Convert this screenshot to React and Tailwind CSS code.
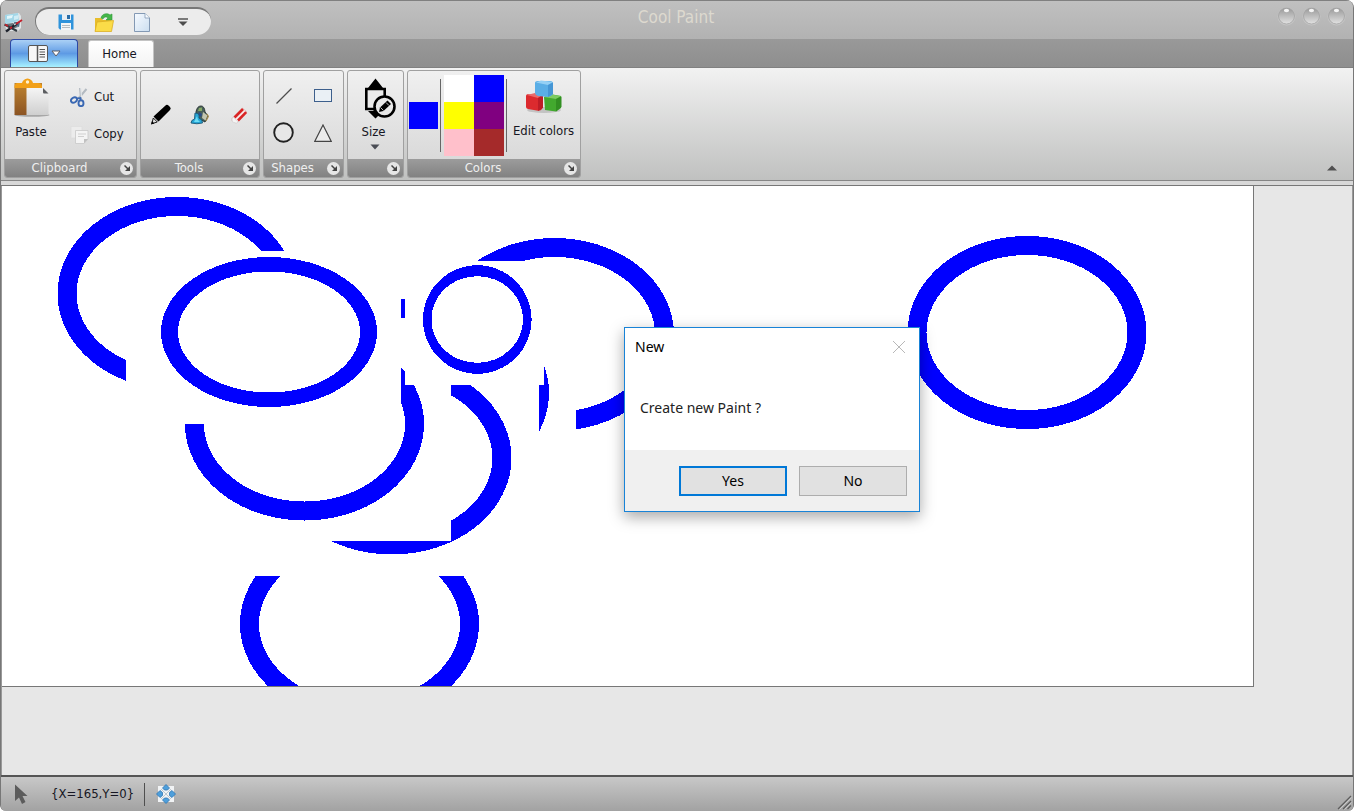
import React from "react";

const BLUE = "#0000ff";

function AppIcon() {
  return (
    <svg width="19" height="20" viewBox="0 0 19 20" aria-hidden="true">
      <path d="M1 2 L15 0 L17 3 L17 15 L14 18 L3 18 L1 13Z" fill="#dfe4e6" />
      <path d="M1 2 L14 0 L15 8 L1 11Z" fill="#a3d7e8" />
      <path d="M3 3 L9 2 L8 5 L3 6Z" fill="#e2f6fb" />
      <path d="M10 3 L15 2 L14 6 L10 7Z" fill="#cfecf5" />
      <path d="M10 9 L16 9 L15 14 L11 13Z" fill="#50748a" />
      <path d="M2 11 L9 10 L14 14 L8 16Z" fill="#66747b" />
      <path d="M0.500 11.500 L13 18" stroke="#353c42" strokeWidth="2" />
      <path d="M2 18.500 L13 10.500" stroke="#1d222c" strokeWidth="2.400" />
      <path d="M12 11 L18 7" stroke="#c5202b" strokeWidth="2" />
      <path d="M6 15.500 L8 14" stroke="#c5202b" strokeWidth="2" />
      <path d="M1 11.500 L4 13" stroke="#c5202b" strokeWidth="1.600" />
      <path d="M10 12 L12 10.800" stroke="#fff" strokeWidth="1" />
    </svg>
  );
}

function SaveIcon() {
  return (
    <svg width="16" height="16" viewBox="0 0 16 16" aria-hidden="true">
      <path d="M0.500 0.500 H15.500 V15.500 H2 L0.500 14Z" fill="#2f93db" />
      <rect x="4" y="0" width="9" height="6" fill="#e8eef3" />
      <rect x="9" y="1" width="3" height="4" fill="#2b6ea8" />
      <rect x="3" y="9" width="10" height="7" fill="#f3f5f6" />
      <path d="M4 11.500 H12 M4 13.500 H12" stroke="#b4bcc2" />
    </svg>
  );
}

function OpenIcon() {
  return (
    <svg width="20" height="19" viewBox="0 0 20 19" aria-hidden="true">
      <path d="M1 5 H7 L9 7 H17 V18 H1Z" fill="#e8bd2b" />
      <path d="M7 5 C8 0 14 0 16 2 L18 1 V7 H12 L14 5 C12 3 10 4 9 6Z" fill="#45b649" stroke="#2f9a38" strokeWidth="0.600" />
      <path d="M3 9 L19.500 7.500 L17.500 18.500 H1Z" fill="#fbdc48" stroke="#dcae25" strokeWidth="0.800" />
    </svg>
  );
}

function NewIcon() {
  return (
    <svg width="16" height="19" viewBox="0 0 16 19" aria-hidden="true">
      <defs>
        <linearGradient id="sheet" x1="0" y1="0" x2="1" y2="1">
          <stop offset="0" stopColor="#f6faff" />
          <stop offset="1" stopColor="#cbdef0" />
        </linearGradient>
      </defs>
      <path d="M0.500 0.500 H11 L15.500 5 V18.500 H0.500Z" fill="url(#sheet)" stroke="#8399b4" />
      <path d="M11 0.500 V5 H15.500" fill="#f7fbff" stroke="#8399b4" strokeWidth="0.800" />
    </svg>
  );
}

function PasteIcon() {
  return (
    <svg width="36" height="39" viewBox="0 0 36 39" aria-hidden="true">
      <defs>
        <linearGradient id="board" x1="0" y1="0" x2="0" y2="1">
          <stop offset="0" stopColor="#bd8330" />
          <stop offset="1" stopColor="#8c5423" />
        </linearGradient>
        <linearGradient id="page" x1="0" y1="0" x2="0" y2="1">
          <stop offset="0" stopColor="#f5f5f5" />
          <stop offset="1" stopColor="#cfcfcf" />
        </linearGradient>
      </defs>
      <ellipse cx="18" cy="37" rx="17.500" ry="1.800" fill="#8d8d8d" opacity="0.700" />
      <path d="M0.500 5 H28 V37 H0.500Z" fill="url(#board)" />
      <path d="M0.500 10 V8 Q1 5 4 5 H8 Q9 1 13.500 0.500 Q18 1 19 5 H24 Q27 5 28 8 V10Z" fill="#f2a018" />
      <circle cx="13.500" cy="4" r="1.700" fill="#fff2cf" />
      <path d="M12.500 10 H29 L34.500 15.500 V37 H12.500Z" fill="url(#page)" />
      <path d="M29 10 L34.500 15.500 H30 Q29 15.500 29 14Z" fill="#5b5d60" />
    </svg>
  );
}

function CutIcon() {
  return (
    <svg width="18" height="20" viewBox="0 0 18 20" aria-hidden="true">
      <path d="M10 1 L11 12 M16.500 2 L8 12" stroke="#b3bac1" strokeWidth="2" />
      <path d="M10.800 1 L11.500 11" stroke="#e9edf0" strokeWidth="1" />
      <ellipse cx="4" cy="13" rx="3.200" ry="2.400" fill="none" stroke="#3a68b3" strokeWidth="1.900" transform="rotate(-35 4 13)" />
      <ellipse cx="11" cy="16.200" rx="2.500" ry="2.900" fill="none" stroke="#3a68b3" strokeWidth="1.900" />
      <path d="M6.500 11.500 L10.500 11 L10.500 13.500" fill="none" stroke="#3a68b3" strokeWidth="1.700" />
    </svg>
  );
}

function CopyIcon() {
  return (
    <svg width="19" height="19" viewBox="0 0 19 19" aria-hidden="true">
      <path d="M1 1.500 H12 V13 H1Z" fill="#ececec" stroke="#dcdcdc" strokeWidth="0.700" />
      <path d="M5.500 5.500 H18 V14 L14 18.500 H5.500Z" fill="#f4f4f4" stroke="#cccccc" strokeWidth="0.900" />
      <path d="M8 9 H16 M8 11.500 H14" stroke="#d0d0d0" />
      <path d="M18 14 H14 V18.500Z" fill="#c0c0c0" />
    </svg>
  );
}

function PenIcon() {
  return (
    <svg width="22" height="22" viewBox="0 0 22 22" aria-hidden="true">
      <path d="M15.500 1.500 Q17 0 19 2 L20 3 Q21.500 4.500 20 6 L8.500 17.500 L3.500 12.500Z" fill="#000" />
      <path d="M3.300 14 L7.300 18 L1.800 19.700Z" fill="#ddd" stroke="#000" strokeWidth="0.900" />
      <path d="M1 20.500 L2 17 L4.300 19.500Z" fill="#000" />
    </svg>
  );
}

function FillIcon() {
  return (
    <svg width="20" height="20" viewBox="0 0 20 20" aria-hidden="true">
      <path d="M6 7 Q7 1 11 1 Q14.500 1 15 7 L18 11 L15 17 L8 13Z" fill="#49605b" stroke="#2b3734" />
      <path d="M9 3 L12 2.500 L12 6 L8 6Z" fill="#86a965" />
      <path d="M13 7 L17.500 10.500 L15.500 15.500 L12 13Z" fill="#c3c6b0" />
      <path d="M17 9 L18.300 11.500 L16 16" fill="none" stroke="#a38b4d" strokeWidth="1.200" />
      <path d="M9 7 L12 9 L11 12 L8 10Z" fill="#2b4c88" />
      <path d="M5 8 Q10 8 9 13 Q13 15 12.500 18 Q7 19.500 1 18 Q1 15 4.500 14Z" fill="#27a6d6" stroke="#1b5877" strokeWidth="0.900" />
      <path d="M4 17 L7 11 L8 15 L10 17Z" fill="#6bdcf5" />
    </svg>
  );
}

function EraserIcon() {
  return (
    <svg width="17" height="17" viewBox="0 0 17 17" aria-hidden="true">
      <path d="M1 11.500 L11.500 1 L16 5 L5.500 16 L1 14Z" fill="#f7e9e9" stroke="#d9a6a6" strokeWidth="0.600" />
      <path d="M3.500 10.500 L12 2" stroke="#d92424" strokeWidth="2.600" />
      <path d="M7 13.500 L15.200 5.200" stroke="#d92424" strokeWidth="2.600" />
      <path d="M1 11.800 L2.500 10.500 L7 14.700 L5.500 16.200 L1.500 15Z" fill="#f4f4f4" stroke="#ccc" strokeWidth="0.500" />
    </svg>
  );
}

function SizeIcon() {
  return (
    <svg width="32" height="42" viewBox="0 0 32 42" aria-hidden="true">
      <path d="M11.500 0.500 L19 10 H4Z M11.500 40.500 L4 33 H19Z" fill="#000" />
      <path d="M2.300 11 H20.700 V31 H2.300Z" fill="#ececec" stroke="#000" strokeWidth="2.600" />
      <path d="M9.500 7 H13.500 V11 H9.500Z M9.500 30 H13.500 V36 H9.500Z" fill="#000" />
      <circle cx="20.500" cy="28.500" r="10" fill="#e8e8e8" stroke="#000" strokeWidth="2.600" />
      <path d="M23.500 22.500 L27 26 L19.500 33 L15 34 L16 29.500Z" fill="#000" />
      <path d="M22 24.500 L25 27.500 M16.500 29.500 L19.500 32.500" stroke="#e8e8e8" strokeWidth="0.800" />
    </svg>
  );
}

function CubesIcon() {
  return (
    <svg width="38" height="34" viewBox="0 0 38 34" aria-hidden="true">
      <defs>
        <filter id="cubeSoft" x="-10%" y="-10%" width="120%" height="120%">
          <feGaussianBlur stdDeviation="0.500" />
        </filter>
      </defs>
      <ellipse cx="19" cy="30" rx="17" ry="3" fill="#9a9a9a" opacity="0.450" />
      <g filter="url(#cubeSoft)">
        <path d="M1 16 Q1 14 3 14.300 L17 16 V29 Q16 31 13 30.800 L3 29 Q1 28.500 1 27Z" fill="#dc2a2e" />
        <path d="M2 15 L10 13 L18 14.500 L13 18Z" fill="#ea6a6a" />
        <path d="M13 18 L18 15 V28 L13 31Z" fill="#be1f25" />
        <path d="M19 17 L25 14 L36 16 V28 L31 31.500 L20 30Z" fill="#42a92f" />
        <path d="M19 17 L26 14.500 L36 16 L31 19Z" fill="#7dcb62" />
        <path d="M31 19 L36.500 16.500 V27 L31 31.500Z" fill="#318f24" />
        <path d="M10 3 Q10 1 13 1 L25 1 Q28 1 28 3.500 V14 Q27 16 23 17 L13 16 Q10 15 10 13Z" fill="#5aaee6" />
        <path d="M11 2.500 L16 0.500 L28 2 L23 5Z" fill="#94d0f5" />
        <path d="M23 5 L28 2.500 V14 L23 17Z" fill="#4496d5" />
      </g>
    </svg>
  );
}

function MoveIcon() {
  return (
    <svg width="20" height="20" viewBox="0 0 20 20" aria-hidden="true">
      <rect x="2" y="2" width="16" height="16" fill="#f1f3f5" />
      <path d="M5 5 L15 15 M15 5 L5 15" stroke="#bcc7cf" strokeWidth="1" />
      <path
        d="M10 0.500 L13.500 4 L11.500 6 H8.500 L6.500 4Z M10 19.500 L6.500 16 L8.500 14 H11.500 L13.500 16Z M0.500 10 L4 6.500 L6.500 8.500 V11.500 L4 13.500Z M19.500 10 L16 13.500 L13.500 11.500 V8.500 L16 6.500Z"
        fill="#4e9fdb"
        stroke="#2e75b2"
        strokeWidth="0.800"
      />
    </svg>
  );
}

function Launcher({ label }) {
  return (
    <button
      type="button"
      aria-label={label}
      className="flex size-[13px] items-center justify-center rounded-full bg-[#e6e6e6]"
    >
      <svg width="6" height="6" viewBox="0 0 6 6" aria-hidden="true">
        <path d="M0.500 0.500 L4 4" fill="none" stroke="#444" strokeWidth="1.500" />
        <path d="M6 1 V6 H1Z" fill="#444" />
      </svg>
    </button>
  );
}

function Group({ title, width, children }) {
  return (
    <section
      className={`flex flex-col overflow-hidden rounded-[3px] border border-[#a0a0a0] bg-linear-to-b from-[#f0f0f0] to-[#d5d5d5] ${width}`}
    >
      <div className="flex flex-1">{children}</div>
      <footer className="flex h-[18px] items-center bg-linear-to-b from-[#9c9c9c] to-[#828282] pr-[3px] text-[#efefef]">
        <h2 className="flex-1 pr-[6px] pb-px text-center leading-4">{title}</h2>
        <Launcher label={`${title || "Size"} options`} />
      </footer>
    </section>
  );
}

function QuickAccess() {
  return (
    <div className="flex h-7 w-[176px] items-center rounded-full border-t-2 border-l border-[#777] bg-[#ececec] pl-[22px]">
      <button type="button" aria-label="Save"><SaveIcon /></button>
      <button type="button" aria-label="Open" className="ml-5"><OpenIcon /></button>
      <button type="button" aria-label="New" className="ml-5"><NewIcon /></button>
      <button type="button" aria-label="Customize toolbar" className="ml-7">
        <svg width="10" height="8" viewBox="0 0 10 8" aria-hidden="true">
          <path d="M0 1 H10" stroke="#555" strokeWidth="1.500" />
          <path d="M0.500 3.500 H9.500 L5 8Z" fill="#4d4d4d" />
        </svg>
      </button>
    </div>
  );
}

function Orb({ label }) {
  return (
    <button type="button" aria-label={label}>
      <svg width="19" height="20" viewBox="0 0 19 20" aria-hidden="true">
        <defs>
          <linearGradient id="orb" x1="0" y1="0" x2="0" y2="1">
            <stop offset="0" stopColor="#999" />
            <stop offset="0.500" stopColor="#bdbdbd" />
            <stop offset="1" stopColor="#e2e2e2" />
          </linearGradient>
        </defs>
        <circle cx="9.500" cy="10.500" r="9" fill="#c6c6c6" />
        <circle cx="9.500" cy="10" r="8" fill="url(#orb)" stroke="#a2a2a2" strokeWidth="0.800" />
        <ellipse cx="9.500" cy="4.500" rx="2.600" ry="1.800" fill="#f4f4f4" />
      </svg>
    </button>
  );
}

function TitleBar() {
  return (
    <header className="grid h-[39px] grid-cols-[1fr_auto_1fr] items-start border-t border-[#808080] bg-linear-to-b from-[#c0c0c0] to-[#b2b2b2]">
      <div className="flex pt-[6px] pl-[3px]">
        <div className="mt-[6px] mr-3"><AppIcon /></div>
        <QuickAccess />
      </div>
      <h1 className="pt-1 pr-0.5 text-[17px] leading-6 text-[#ddd9cf]">Cool Paint</h1>
      <div className="flex justify-end gap-[6px] pt-[5px] pr-[7px]">
        <Orb label="Minimize" />
        <Orb label="Maximize" />
        <Orb label="Close" />
      </div>
    </header>
  );
}

function Tabs() {
  return (
    <nav className="flex h-[29px] items-end gap-[10px] border-b border-[#808080] bg-linear-to-b from-[#999] to-[#8e8e8e] pl-[9px]">
      <button
        type="button"
        aria-label="Application menu"
        className="flex h-[28px] w-[68px] items-center justify-center gap-[3px] rounded-t border border-b-0 border-[#2c48a4] bg-linear-to-b from-[#aad0f5] via-[#5e9ae4] to-[#a8f2ff]"
      >
        <svg width="20" height="17" viewBox="0 0 20 17" aria-hidden="true">
          <rect x="0.500" y="0.500" width="19" height="16" rx="1.500" fill="#f6f6f6" stroke="#555" />
          <path d="M9.500 1 V16" stroke="#555" strokeWidth="1.500" />
          <path d="M11.500 4.500 H17 M11.500 7 H17 M11.500 9.500 H17 M11.500 12 H17" stroke="#555" strokeWidth="1.200" />
        </svg>
        <svg width="10" height="7" viewBox="0 0 10 7" aria-hidden="true">
          <path d="M1 1 H9 L5 6Z" fill="#fff" stroke="#5b5f68" strokeWidth="1" />
        </svg>
      </button>
      <button
        type="button"
        className="h-[27px] w-[66px] rounded-t-[3px] border border-b-0 border-[#c4c4c4] bg-linear-to-b from-white to-[#f3f3f3] pr-[3px]"
      >
        Home
      </button>
    </nav>
  );
}

const toolButton = "flex items-center justify-center";

function Ribbon() {
  const palette = [
    ["White", "bg-white"],
    ["Blue", "bg-[#0000ff]"],
    ["Yellow", "bg-[#ffff00]"],
    ["Purple", "bg-[#800080]"],
    ["Pink", "bg-[#ffc0cb]"],
    ["Brown", "bg-[#a52a2a]"],
  ];
  return (
    <div className="flex h-[113px] items-start gap-[3px] border-b border-[#858585] bg-linear-to-b from-[#f2f2f2] to-[#c0c1c0] pt-[2px] pl-[3px] *:h-[108px]">
      <Group title="Clipboard" width="w-[133px]">
        <button type="button" className="flex w-[52px] flex-col items-center pt-[7px]">
          <span className="pl-0.5"><PasteIcon /></span>
          <span className="mt-[7px] leading-4">Paste</span>
        </button>
        <div className="flex flex-col pl-[13px]">
          <button type="button" className="mt-4 flex h-5 items-center gap-[6px]"><CutIcon />Cut</button>
          <button type="button" className="mt-[17px] flex h-5 items-center gap-[5px]"><CopyIcon />Copy</button>
        </div>
      </Group>
      <Group title="Tools" width="w-[120px]">
        <div className="grid flex-1 grid-cols-3">
          <button type="button" aria-label="Pencil" className={toolButton}><PenIcon /></button>
          <button type="button" aria-label="Fill" className={toolButton}><FillIcon /></button>
          <button type="button" aria-label="Eraser" className={toolButton}><EraserIcon /></button>
        </div>
      </Group>
      <Group title="Shapes" width="w-[81px]">
        <div className="grid flex-1 grid-cols-2 py-[7px]">
          <button type="button" aria-label="Line" className={toolButton}>
            <svg width="18" height="18" viewBox="0 0 18 18" aria-hidden="true">
              <path d="M1.500 16.500 L16.500 1.500" stroke="#4d4d4d" strokeWidth="1.200" />
            </svg>
          </button>
          <button type="button" aria-label="Rectangle" className={toolButton}>
            <svg width="18" height="13" viewBox="0 0 18 13" aria-hidden="true">
              <rect x="0.500" y="0.500" width="17" height="12" fill="#eaf0f5" stroke="#3d5f8c" />
            </svg>
          </button>
          <button type="button" aria-label="Ellipse" className={toolButton}>
            <svg width="21" height="21" viewBox="0 0 21 21" aria-hidden="true">
              <circle cx="10.500" cy="10.500" r="9.300" fill="#e7e7e7" stroke="#222" strokeWidth="1.900" />
            </svg>
          </button>
          <button type="button" aria-label="Triangle" className={toolButton}>
            <svg width="18" height="18" viewBox="0 0 18 18" aria-hidden="true">
              <path d="M9 1 L17.200 17.300 H0.800Z" fill="#ececec" stroke="#444" strokeWidth="1.200" />
            </svg>
          </button>
        </div>
      </Group>
      <Group title="" width="w-[57px]">
        <button type="button" className="flex flex-1 flex-col items-center pt-[7px]">
          <span className="pl-2"><SizeIcon /></span>
          <span className="mt-1 pr-1 leading-4">Size</span>
          <svg className="mt-1 mr-0.5" width="10" height="6" viewBox="0 0 10 6" aria-hidden="true">
            <path d="M0.500 0.500 H9.500 L5 5.500Z" fill="#4a4d55" />
          </svg>
        </button>
      </Group>
      <Group title="Colors" width="w-[174px]">
        <div className="flex items-center pl-px">
          <button type="button" aria-label="Current color" className="h-[27px] w-[29px] bg-[#0000ff]" />
          <div className="mx-0.5 h-[73px] w-px bg-[#666]" />
          <div className="mr-0.5 ml-px grid grid-cols-2">
            {palette.map(([name, color]) => (
              <button key={name} type="button" aria-label={name} className={`h-[27px] w-[30px] ${color}`} />
            ))}
          </div>
          <div className="h-[73px] w-px bg-[#666]" />
        </div>
        <button type="button" className="flex flex-1 flex-col items-center pt-[9px]">
          <CubesIcon />
          <span className="mt-[9px] leading-4 whitespace-nowrap">Edit colors</span>
        </button>
      </Group>
      <div className="flex flex-1 items-end justify-end pr-4 pb-[7px]">
        <button type="button" aria-label="Collapse ribbon">
          <svg width="10" height="6" viewBox="0 0 10 6" aria-hidden="true">
            <path d="M0 5.500 L5 0.500 L10 5.500Z" fill="#505050" />
          </svg>
        </button>
      </div>
    </div>
  );
}

function Ring({ cx, cy, clip }) {
  return (
    <ellipse cx={cx} cy={cy} rx="110" ry="87" fill="none" stroke={BLUE} strokeWidth="19" clipPath={clip} />
  );
}

function Drawing() {
  return (
    <svg
      role="img"
      aria-label="Paint canvas"
      className="block h-[501px] w-[1252px] shrink-0 border-r border-b border-[#777] bg-white"
      viewBox="2 186 1251 500"
      shapeRendering="crispEdges"
    >
      <defs>
        <clipPath id="upperLeft"><path d="M2 186 H400 V251 H126 V500 H2Z" /></clipPath>
        <clipPath id="upperRight"><path d="M400 186 H800 V500 H576 V261 H400Z" /></clipPath>
        <clipPath id="middleLeft"><path d="M180 424 H401 V300 H405 V385 H430 V530 H180Z" /></clipPath>
        <clipPath id="middle"><path d="M451 385 H520 V560 H260 V541 H451Z" /></clipPath>
        <clipPath id="sliver"><path d="M539 385 H544 V360 H560 V440 H539Z" /></clipPath>
        <clipPath id="bottom"><path d="M220 576 H500 V686 H220Z" /></clipPath>
      </defs>
      <Ring cx="177" cy="293.500" clip="url(#upperLeft)" />
      <Ring cx="554.500" cy="334.500" clip="url(#upperRight)" />
      <Ring cx="1027" cy="332.500" />
      <Ring cx="304.500" cy="424" clip="url(#middleLeft)" />
      <Ring cx="392" cy="458" clip="url(#middle)" />
      <Ring cx="429.500" cy="393" clip="url(#sliver)" />
      <Ring cx="359.500" cy="624" clip="url(#bottom)" />
      <g fill={BLUE} fillRule="evenodd">
        <path d="M161 332 a108 75 0 1 0 216 0 a108 75 0 1 0 -216 0Z M178 332 a91 60.500 0 1 0 182 0 a91 60.500 0 1 0 -182 0Z" />
        <path d="M423 319.500 a54.300 54.300 0 1 0 108.600 0 a54.300 54.300 0 1 0 -108.600 0Z M431.500 319.500 a45.700 43.300 0 1 0 91.400 0 a45.700 43.300 0 1 0 -91.400 0Z" />
        <path d="M401 298.500 H405 V317.500 H401Z" />
      </g>
    </svg>
  );
}

function NewDialog() {
  return (
    <div
      role="dialog"
      aria-labelledby="dialog-title"
      className="absolute top-[327px] left-[623px] flex w-[296px] flex-col border border-[#1883d7] bg-white font-['Noto_Sans','Open_Sans',sans-serif] text-sm text-black shadow-[0_5px_14px_rgba(0,0,0,0.35)]"
    >
      <div className="flex h-[38px] items-center justify-between pr-[13px] pl-[10px]">
        <h2 id="dialog-title">New</h2>
        <button type="button" aria-label="Close dialog">
          <svg width="14" height="14" viewBox="0 0 14 14" aria-hidden="true">
            <path d="M1 1 L13 13 M13 1 L1 13" stroke="#b8b8b8" strokeWidth="1" />
          </svg>
        </button>
      </div>
      <p className="flex h-[84px] items-center pl-[15px] text-[#222]">Create new Paint ?</p>
      <div className="flex h-[61px] items-center justify-end gap-3 bg-[#f0f0f0] pr-3">
        <button type="button" className="h-[30px] w-[108px] border-2 border-[#0078d7] bg-[#e1e1e1]">Yes</button>
        <button type="button" className="h-[30px] w-[108px] border border-[#adadad] bg-[#e1e1e1]">No</button>
      </div>
    </div>
  );
}

function StatusBar() {
  return (
    <footer className="flex h-9 items-center border-t-2 border-[#555] bg-linear-to-b from-[#c8c8c8] to-[#a2a2a2] pl-[13px]">
      <svg width="15" height="21" viewBox="0 0 15 21" aria-hidden="true">
        <path d="M1 0.500 L13.500 12 H8.500 L11.500 18 L8 20 L5 13.500 L1 17Z" fill="#5c5c5c" />
      </svg>
      <output className="ml-[22px] leading-4">{"{X=165,Y=0}"}</output>
      <div className="mr-[11px] ml-[10px] h-[23px] w-px bg-[#4f4f4f]" />
      <MoveIcon />
      <svg className="mr-px ml-auto self-end" width="15" height="16" viewBox="0 0 15 16" aria-hidden="true">
        <path d="M1 14 L14 1 M6 14 L14 6 M10.500 14 L14 10.500" stroke="#5c5c5c" strokeWidth="1.200" />
        <path d="M2.500 14.500 L14.500 2.500 M7.500 14.500 L14.500 7.500" stroke="#d0d0d0" strokeWidth="0.800" />
      </svg>
    </footer>
  );
}

export default function App() {
  return (
    <div className="relative flex min-h-screen flex-col overflow-hidden rounded-t-lg rounded-b-md border-x border-[#777] bg-[#b8b8b8] font-['DejaVu_Sans_Condensed','DejaVu_Sans',sans-serif] text-[13px] text-[#161623]">
      <TitleBar />
      <Tabs />
      <Ribbon />
      <div className="h-[5px] border-b border-[#777] bg-[#d8d8d8]" />
      <main className="flex-1 overflow-hidden border-x border-[#999] bg-[#e7e7e7]">
        <Drawing />
      </main>
      <StatusBar />
      <NewDialog />
    </div>
  );
}
